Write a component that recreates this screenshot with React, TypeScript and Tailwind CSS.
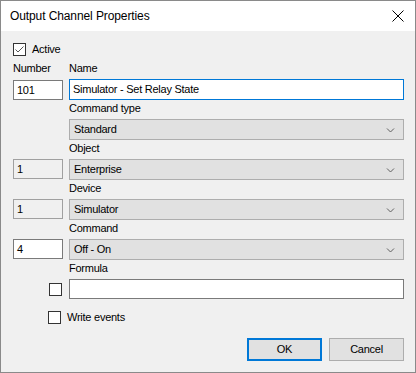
import React from "react";

const font = { fontFamily: '"Liberation Sans", Arial, sans-serif', letterSpacing: "-0.25px" };

function Chevron() {
  return (
    <svg width="9" height="5" viewBox="0 0 9 5" className="absolute right-[8px] top-[8px]">
      <path d="M1 0.5 L4.5 4 L8 0.5" fill="none" stroke="#606060" strokeWidth="1" />
    </svg>
  );
}

function Combo({ text }: { text: string }) {
  return (
    <div className="relative h-[21px] bg-[#e1e1e1] border border-[#adadad] pl-[4px] flex items-center text-[11px] text-black">
      {text}
      <Chevron />
    </div>
  );
}

function SmallBox({ text, enabled }: { text: string; enabled?: boolean }) {
  return (
    <div
      className={
        "h-[20px] w-[50px] border flex items-center pl-[3px] text-[11px] text-black " +
        (enabled ? "bg-white border-[#7a7a7a]" : "bg-[#f0f0f0] border-[#a0a0a0]")
      }
    >
      {text}
    </div>
  );
}

function Check({ checked }: { checked?: boolean }) {
  return (
    <div className="w-[13px] h-[13px] border border-[#333333] bg-white relative shrink-0">
      {checked && (
        <svg width="11" height="11" viewBox="0 0 11 11" className="absolute left-0 top-0">
          <path d="M1.5 5.5 L4 8 L9.5 2.5" fill="none" stroke="#555" strokeWidth="1" />
        </svg>
      )}
    </div>
  );
}

function Label({ text }: { text: string }) {
  return <div className="h-[19px] flex items-end pb-[4px] text-[11px] leading-[13px] text-black">{text}</div>;
}

export default function App() {
  return (
    <div className="w-[416px] h-[373px] border border-[#8a8a8a] flex flex-col" style={font}>
      <div className="h-[30px] bg-white flex items-center justify-between pl-[9px] pr-[11px] shrink-0">
        <span className="text-[12px] text-black" style={{ letterSpacing: "-0.1px" }}>
          Output Channel Properties
        </span>
        <svg width="12" height="12" viewBox="0 0 12 12">
          <path d="M0.5 0.5 L11.5 11.5 M11.5 0.5 L0.5 11.5" stroke="#000" strokeWidth="1" />
        </svg>
      </div>
      <div className="flex-1 bg-[#f0f0f0] pl-[12px] pr-[11px] pt-[12px]">
        <div className="flex items-center gap-[6px] h-[13px]">
          <Check checked />
          <span className="text-[11px] text-black">Active</span>
        </div>
        <div className="grid grid-cols-[50px_1fr] gap-x-[6px]">
          <div className="h-[23px] flex items-end pb-[4px] text-[11px] leading-[13px]">Number</div>
          <div className="h-[23px] flex items-end pb-[4px] text-[11px] leading-[13px]">Name</div>
          <div className="pt-[1px]">
            <SmallBox text="101" enabled />
          </div>
          <div className="h-[21px] bg-white border border-[#0078d7] pl-[3px] flex items-center text-[11px] text-black">
            Simulator - Set Relay State
          </div>

          <div />
          <Label text="Command type" />
          <div />
          <Combo text="Standard" />

          <div />
          <Label text="Object" />
          <SmallBox text="1" />
          <Combo text="Enterprise" />

          <div />
          <Label text="Device" />
          <SmallBox text="1" />
          <Combo text="Simulator" />

          <div />
          <Label text="Command" />
          <SmallBox text="4" enabled />
          <Combo text="Off - On" />

          <div />
          <Label text="Formula" />
          <div className="flex justify-end items-center h-[20px] pr-[1px]">
            <Check />
          </div>
          <div className="h-[20px] bg-white border border-[#7a7a7a]" />
        </div>
        <div className="flex items-center gap-[6px] h-[13px] mt-[12px] ml-[35px]">
          <Check />
          <span className="text-[11px] text-black">Write events</span>
        </div>
        <div className="flex justify-end gap-[7px] mt-[14px]">
          <div className="w-[75px] h-[23px] bg-[#e1e1e1] border-2 border-[#0078d7] flex items-center justify-center text-[11px] text-black">
            OK
          </div>
          <div className="w-[75px] h-[23px] bg-[#e1e1e1] border border-[#adadad] flex items-center justify-center text-[11px] text-black">
            Cancel
          </div>
        </div>
      </div>
    </div>
  );
}
